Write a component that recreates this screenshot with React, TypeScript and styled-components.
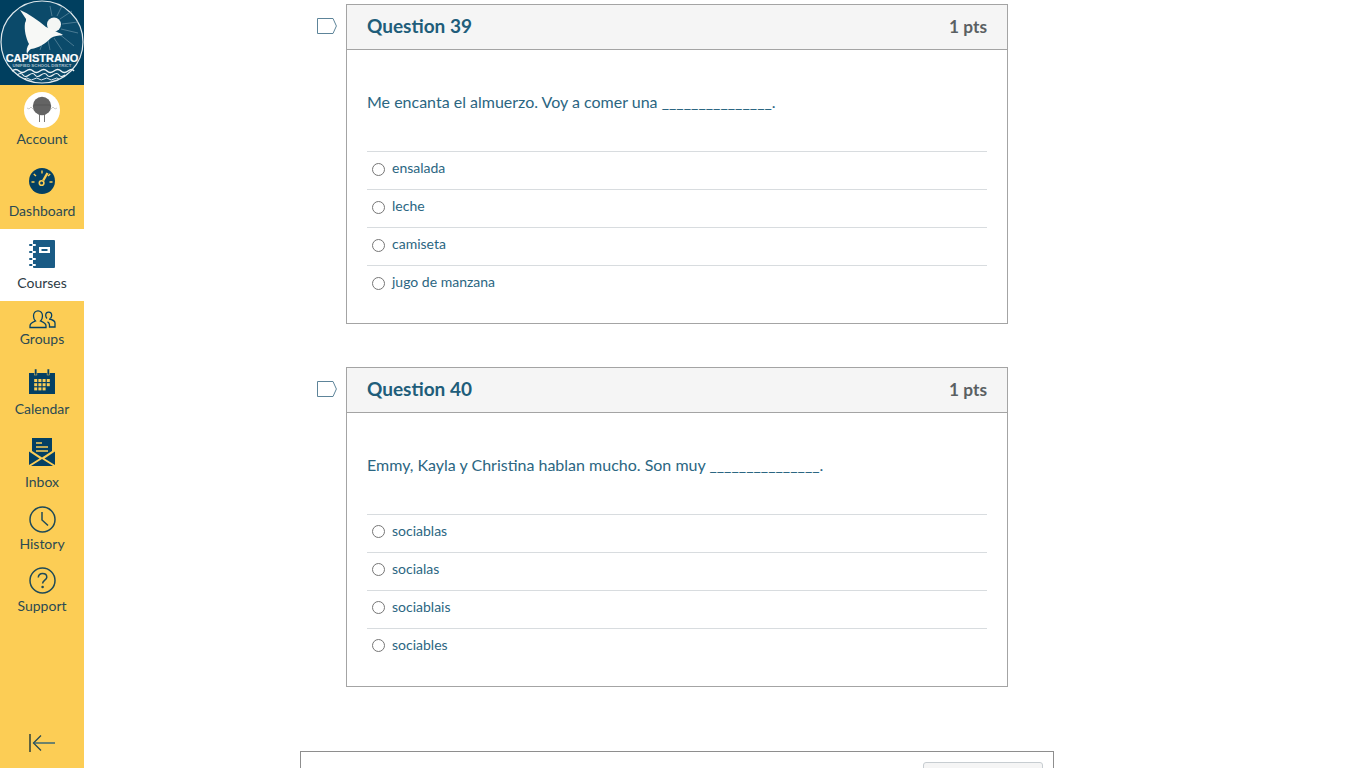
import React from "react";
import styled, { createGlobalStyle } from "styled-components";

const Global = createGlobalStyle`
  html, body { margin: 0; padding: 0; height: 768px; overflow: hidden; background: #fff; }
  body { font-family: Lato, "Open Sans", sans-serif; }
  * { box-sizing: border-box; }
`;

const Page = styled.div`
  display: flex;
  height: 768px;
  overflow: hidden;
`;

const Sidebar = styled.nav`
  width: 84px;
  flex: none;
  height: 768px;
  background: #fccd55;
  display: flex;
  flex-direction: column;
`;

const LogoBox = styled.div`
  height: 85px;
  flex: none;
  background: #003f5f;
`;

const NavItem = styled.a<{ $top: number; $active?: boolean; $height?: number }>`
  display: flex;
  flex-direction: column;
  align-items: center;
  flex: none;
  padding-top: ${(p) => p.$top}px;
  height: ${(p) => (p.$height ? `${p.$height}px` : "auto")};
  background: ${(p) => (p.$active ? "#fff" : "transparent")};
`;

const IconBox = styled.div<{ $h: number }>`
  height: ${(p) => p.$h}px;
  display: flex;
  align-items: flex-start;
  justify-content: center;
`;

const NavLabel = styled.span<{ $active?: boolean }>`
  font-size: 14px;
  line-height: 20px;
  color: ${(p) => (p.$active ? "#2d3b45" : "#2b4a52")};
  white-space: nowrap;
`;

const Avatar = styled.div`
  width: 36px;
  height: 36px;
  border-radius: 50%;
  background: #fff;
  display: flex;
  align-items: center;
  justify-content: center;
`;

const Collapse = styled.div`
  margin-top: auto;
  height: 34px;
  display: flex;
  align-items: flex-start;
  justify-content: center;
`;

const Main = styled.main`
  flex: 1;
  padding: 4px 0 0 216px;
`;

const QuestionRow = styled.section`
  display: flex;
  margin-bottom: 43px;
`;

const TagBox = styled.div`
  width: 46px;
  flex: none;
  padding: 14px 0 0 17px;
`;

const Card = styled.div`
  width: 662px;
  border: 1px solid #a4a4a4;
`;

const CardHeader = styled.header`
  height: 45px;
  background: #f5f5f5;
  border-bottom: 1px solid #a4a4a4;
  padding: 0 20px;
  display: flex;
  justify-content: space-between;
  align-items: flex-start;
`;

const Title = styled.h2`
  margin: 8px 0 0;
  font-size: 19px;
  line-height: 26px;
  font-weight: 700;
  color: #205d7a;
`;

const Points = styled.span`
  margin-top: 11px;
  font-size: 17.3px;
  line-height: 22px;
  font-weight: 700;
  color: #5a5f62;
`;

const CardBody = styled.div`
  padding: 40px 20px 20px;
`;

const QuestionText = styled.p`
  margin: 0 0 37px;
  font-size: 16px;
  line-height: 24px;
  color: #2b6682;
`;

const Answer = styled.label`
  height: 38px;
  border-top: 1px solid #d8dcdf;
  display: flex;
  align-items: center;
  gap: 7px;
  padding: 0 0 4px 5px;
  font-size: 14px;
  color: #2b6682;
`;

const Radio = styled.input<{ $raised?: boolean }>`
  width: 13px;
  height: 13px;
  margin: ${(p) => (p.$raised ? "0" : "2px")} 0 0;
  flex: none;
`;

const AnswerText = styled.span`
  line-height: 20px;
  margin-top: -2px;
`;

const FooterBox = styled.div`
  width: 754px;
  height: 100px;
  margin-top: 64px;
  border: 1px solid #8e8e8e;
  padding: 10px 10px 0 0;
  display: flex;
  justify-content: flex-end;
  align-items: flex-start;
`;

const SubmitButton = styled.button`
  width: 120px;
  height: 36px;
  background: #f5f5f5;
  border: 1px solid #c7cdd1;
  border-radius: 3px;
`;

const NAVY = "#044063";
const INK = "#1f4a58";
const YELLOW = "#fccd55";

const Logo = () => (
  <svg width="84" height="85" viewBox="0 0 84 85">
    <rect width="84" height="85" fill="#003f5f" />
    <circle cx="42" cy="42" r="41" fill="#0b4a6a" stroke="#dfe8ec" strokeWidth="1.2" />
    <g stroke="#6f97ab" strokeWidth="0.8" opacity="0.8">
      <path d="M60 19 L72 11 M62 24 L78 22 M61 29 L78 33 M58 33 L74 46 M54 38 L62 50 M48 40 L50 50 M42 44 L40 50 M52 16 L50 6 M57 16 L62 6" />
    </g>
    <circle cx="54" cy="24.5" r="7" fill="#f4f6f4" />
    <path d="M20 10 C29 14 38 20 46 27 C50 29 54 30 57 32 C59 33 61 33.5 63 35 C58 35.5 54 36 51 38 C46 43 39 48 31 49 C29 50 28 52 27 54 C26 50 27 47 29 44 C26 38 24 30 25 23 C26 21 26 20 26 19 C24 16 22 13 20 10Z" fill="#f7f8f6" />
    <text x="42" y="61.5" textAnchor="middle" fontFamily="'Liberation Sans', sans-serif" fontWeight="700" fontSize="11" fill="#fff" stroke="#fff" strokeWidth="0.2">CAPISTRANO</text>
    <text x="42" y="66.5" textAnchor="middle" fontFamily="'Liberation Sans', sans-serif" fontWeight="700" fontSize="4.4" fill="#a9c0cc">UNIFIED SCHOOL DISTRICT</text>
    <path d="M12 71 q4 -3 7 0 t7 0 t7 0 t7 0 t7 0 t7 0 t7 0 t7 0 t6 0" fill="none" stroke="#eef3f5" strokeWidth="1.4" />
    <path d="M17 75 q4 -3 6 0 t6 0 t6 0 t6 0 t6 0 t6 0 t6 0 t6 0" fill="none" stroke="#eef3f5" strokeWidth="1.2" />
    <path d="M24 79 q3 -2 5 0 t5 0 t5 0 t5 0 t5 0 t5 0 t5 0" fill="none" stroke="#dbe5ea" strokeWidth="1" />
  </svg>
);

const AvatarArt = () => (
  <svg width="36" height="36" viewBox="0 0 36 36">
    <circle cx="18" cy="14" r="9.2" fill="#646464" />
    <path d="M10 13 h16" stroke="#4a4a4a" strokeWidth="0.5" />
    <path d="M15.5 23 v7 M20.5 23 v7" stroke="#666" strokeWidth="0.9" />
    <path d="M9 17 l-2 -2 l-2 2 l-2 -1 M27 17 l2 -2 l2 2 l2 -1" stroke="#999" strokeWidth="0.5" fill="none" />
  </svg>
);

const DashboardIcon = () => (
  <svg width="26" height="26" viewBox="0 0 26 26">
    <circle cx="13" cy="13" r="13" fill={NAVY} />
    <path d="M13 2.5 v3 M4.8 6 l2.2 2 M21.2 6 l-2.2 2 M2.5 14 h3 M20.5 14 h3" stroke={YELLOW} strokeWidth="1.4" />
    <path d="M18.5 5 L14.2 12.5" stroke={YELLOW} strokeWidth="2.4" />
    <circle cx="12.6" cy="15" r="2.3" fill="none" stroke={YELLOW} strokeWidth="1.6" />
  </svg>
);

const CoursesIcon = () => (
  <svg width="26" height="28" viewBox="0 0 26 28">
    <rect x="4" y="0" width="22" height="28" rx="1" fill="#1a5b85" />
    <rect x="10" y="7" width="11" height="6" fill="#fff" />
    <rect x="12.5" y="9" width="6" height="2" fill="#1a5b85" />
    <g fill="none" strokeLinecap="round" strokeWidth="2">
      <path d="M1 5 h3 M1 12 h3 M1 19 h3 M1 25 h3" stroke="#1a5b85" />
      <path d="M4 5 h2 M4 12 h2 M4 19 h2 M4 25 h2" stroke="#fff" />
    </g>
  </svg>
);

const GroupsIcon = () => (
  <svg width="27" height="19" viewBox="0 0 27 19" fill="none" stroke={NAVY} strokeWidth="1.3">
    <path d="M1 17.5 v-1.5 c0 -3 3 -4 5.5 -5 c-1.5 -1.5 -2 -3 -2 -5 c0 -3 2 -5.2 4.5 -5.2 s4.5 2.2 4.5 5.2 c0 2 -.5 3.5 -2 5 c2.5 1 5.5 2 5.5 5 v1.5 Z" />
    <path d="M18 8.5 c-1 -1 -1.3 -2 -1.3 -3 c0 -2 1.3 -3.3 3 -3.3 s3 1.3 3 3.3 c0 1 -.3 2 -1.3 3" />
    <path d="M20 9 c2.5 .5 6 1.5 6 4 v4 h-5.5 v-2 c0 -1.5 -.8 -2.5 -2 -3.2" />
  </svg>
);

const CalendarIcon = () => {
  const cells: React.ReactElement[] = [];
  for (let r = 0; r < 3; r++) {
    for (let c = 0; c < 4; c++) {
      if (r === 2 && c === 3) continue;
      cells.push(<rect key={`${r}-${c}`} x={5.2 + c * 4.2} y={10 + r * 4.2} width="3" height="3" fill={YELLOW} />);
    }
  }
  return (
    <svg width="26" height="25" viewBox="0 0 26 25">
      <path d="M0 4 h26 v21 h-26 Z" fill={NAVY} />
      <rect x="5.5" y="0" width="2.4" height="6" fill={NAVY} stroke={YELLOW} strokeWidth="0.5" />
      <rect x="18.1" y="0" width="2.4" height="6" fill={NAVY} stroke={YELLOW} strokeWidth="0.5" />
      {cells}
    </svg>
  );
};

const InboxIcon = () => (
  <svg width="26" height="28" viewBox="0 0 26 28">
    <path d="M3 0 h20 v13 L13 19.5 L3 13 Z" fill={NAVY} />
    <path d="M7 5 h6 M7 9 h12 M7 13 h12" stroke={YELLOW} strokeWidth="1.4" />
    <path d="M0 27 V13.5 L10.5 20.5 Z" fill={NAVY} />
    <path d="M26 27 V13.5 L15.5 20.5 Z" fill={NAVY} />
    <path d="M2 28 L13 21 L24 28 Z" fill={NAVY} />
  </svg>
);

const HistoryIcon = () => (
  <svg width="27" height="27" viewBox="0 0 27 27" fill="none" stroke={INK} strokeWidth="1.5">
    <circle cx="13.5" cy="13.5" r="12.5" />
    <path d="M13 6 V14 L19 19.5" />
  </svg>
);

const SupportIcon = () => (
  <svg width="27" height="27" viewBox="0 0 27 27" fill="none" stroke={INK} strokeWidth="1.5">
    <circle cx="13.5" cy="13.5" r="12.5" />
    <path d="M9.3 10.5 C9.3 8 11 6.6 13.5 6.6 C16 6.6 17.8 8 17.8 10.2 C17.8 13 13.6 13.4 13.6 16.5" />
    <circle cx="13.6" cy="20" r="1.3" fill={INK} stroke="none" />
  </svg>
);

const CollapseIcon = () => (
  <svg width="26" height="18" viewBox="0 0 26 18" fill="none">
    <path d="M1 0 V18" stroke="#3a4a3a" strokeWidth="1.6" />
    <path d="M12 1.5 L4.5 9 L12 16.5" stroke="#2a4a50" strokeWidth="1.3" />
    <path d="M4.5 9 H26" stroke="#1f5a78" strokeWidth="1.3" />
  </svg>
);

const TagIcon = () => (
  <svg width="20" height="16" viewBox="0 0 20 16" fill="none" style={{ display: "block" }}>
    <path d="M.5 .5 H16 L19.4 8 L16 15.5 H.5 Z" stroke="#5d8499" strokeWidth="1" />
  </svg>
);

const questions = [
  {
    n: 39,
    raised: false,
    text: "Me encanta el almuerzo. Voy a comer una _______________.",
    answers: ["ensalada", "leche", "camiseta", "jugo de manzana"],
  },
  {
    n: 40,
    raised: true,
    text: "Emmy, Kayla y Christina hablan mucho. Son muy _______________.",
    answers: ["sociablas", "socialas", "sociablais", "sociables"],
  },
];

export default function App() {
  return (
    <Page>
      <Global />
      <Sidebar>
        <LogoBox>
          <Logo />
        </LogoBox>
        <NavItem $top={7} $height={72}>
          <IconBox $h={37}>
            <Avatar>
              <AvatarArt />
            </Avatar>
          </IconBox>
          <NavLabel>Account</NavLabel>
        </NavItem>
        <NavItem $top={11} $height={72}>
          <IconBox $h={33}>
            <DashboardIcon />
          </IconBox>
          <NavLabel>Dashboard</NavLabel>
        </NavItem>
        <NavItem $top={11} $height={72} $active>
          <IconBox $h={33}>
            <CoursesIcon />
          </IconBox>
          <NavLabel $active>Courses</NavLabel>
        </NavItem>
        <NavItem $top={9}>
          <IconBox $h={19}>
            <GroupsIcon />
          </IconBox>
          <NavLabel>Groups</NavLabel>
        </NavItem>
        <NavItem $top={20}>
          <IconBox $h={30}>
            <CalendarIcon />
          </IconBox>
          <NavLabel>Calendar</NavLabel>
        </NavItem>
        <NavItem $top={19}>
          <IconBox $h={34}>
            <InboxIcon />
          </IconBox>
          <NavLabel>Inbox</NavLabel>
        </NavItem>
        <NavItem $top={14}>
          <IconBox $h={28}>
            <HistoryIcon />
          </IconBox>
          <NavLabel>History</NavLabel>
        </NavItem>
        <NavItem $top={13}>
          <IconBox $h={29}>
            <SupportIcon />
          </IconBox>
          <NavLabel>Support</NavLabel>
        </NavItem>
        <Collapse>
          <CollapseIcon />
        </Collapse>
      </Sidebar>
      <Main>
        {questions.map((q) => (
          <QuestionRow key={q.n}>
            <TagBox>
              <TagIcon />
            </TagBox>
            <Card>
              <CardHeader>
                <Title>Question {q.n}</Title>
                <Points>1 pts</Points>
              </CardHeader>
              <CardBody>
                <QuestionText>{q.text}</QuestionText>
                {q.answers.map((a) => (
                  <Answer key={a}>
                    <Radio type="radio" name={`q${q.n}`} $raised={q.raised} />
                    <AnswerText>{a}</AnswerText>
                  </Answer>
                ))}
              </CardBody>
            </Card>
          </QuestionRow>
        ))}
        <FooterBox>
          <SubmitButton type="button" aria-label="Submit quiz" />
        </FooterBox>
      </Main>
    </Page>
  );
}
